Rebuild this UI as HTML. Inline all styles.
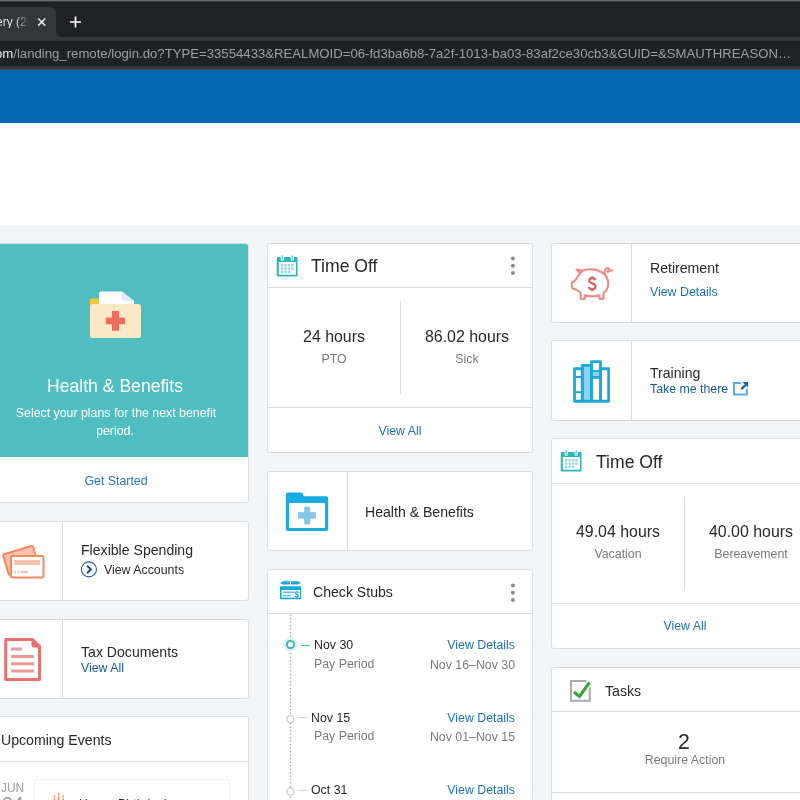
<!DOCTYPE html>
<html><head><meta charset="utf-8">
<style>
*{margin:0;padding:0;box-sizing:border-box}
html,body{width:800px;height:800px;overflow:hidden;background:#f2f5f8;font-family:"Liberation Sans",sans-serif;position:relative}
.a{position:absolute}
.t{position:absolute;white-space:nowrap;line-height:1;will-change:transform}
.card{position:absolute;background:#fff;border:1px solid #dcdcdc;border-radius:3px;overflow:hidden}
.hl{position:absolute;left:0;right:0;height:1px;background:#dcdcdc}
.vl{position:absolute;top:0;bottom:0;width:1px;background:#dcdcdc}
.dk{color:#2e2e2e}
.gr{color:#7a7a7a}
.bl{color:#1f66b3}
</style></head><body>
<!-- browser chrome -->
<div class="a" style="left:0;top:0;width:800px;height:70px;background:#202124"></div>
<div class="a" style="left:0;top:0;width:800px;height:1px;background:#6b6c6e"></div>
<div class="a" style="left:0;top:1px;width:800px;height:1px;background:#3a3b3e"></div>
<div class="a" style="left:-20px;top:7px;width:76px;height:40px;background:#35363a;border-radius:6px 6px 0 0"></div>
<div class="a" style="left:56px;top:31px;width:6px;height:6px;background:#35363a"></div>
<div class="a" style="left:56px;top:25px;width:12px;height:12px;background:#202124;border-radius:0 0 0 6px"></div>
<div class="a" style="left:0;top:37px;width:800px;height:32px;background:#35363a"></div>
<div class="a" style="left:-20px;top:41px;width:840px;height:25px;background:#202124"></div>
<div class="a" style="left:0;top:69px;width:800px;height:1px;background:#4a4a4c"></div>
<div class="t" style="left:-4px;top:15.5px;width:33px;overflow:hidden;font-size:12px;color:transparent;background:linear-gradient(90deg,#e8eaed 0,#e8eaed 20px,#a9abae 25px,rgba(53,54,58,0) 33px);-webkit-background-clip:text;background-clip:text">ery (20</div>
<svg class="a" style="left:36px;top:16px" width="12" height="12" viewBox="0 0 12 12"><path d="M2.2 2.5L9.3 9.6M9.3 2.5L2.2 9.6" stroke="#e8eaed" stroke-width="1.5"/></svg>
<svg class="a" style="left:68px;top:15px" width="14" height="14" viewBox="0 0 14 14"><path d="M7.5 1.5V12.5M2 7H13" stroke="#fff" stroke-width="1.7"/></svg>
<div class="t" style="left:-5.2px;top:46.5px;font-size:13.17px;color:#9aa0a6"><span style="color:#e8eaed">om</span>/landing_remote/login.do?TYPE=33554433&amp;REALMOID=06-fd3ba6b8-7a2f-1013-ba03-83af2ce30cb3&amp;GUID=&amp;SMAUTHREASON…</div>
<!-- blue header -->
<div class="a" style="left:0;top:70px;width:800px;height:53px;background:#0467b1"></div>
<div class="a" style="left:0;top:123px;width:800px;height:102px;background:#fff"></div>

<!-- LEFT COLUMN -->
<div class="card" style="left:-17px;top:243px;width:266px;height:260px">
  <div class="a" style="left:-1px;top:-1px;right:-1px;height:214px;background:#50bec1"></div>
</div>
<div class="card" style="left:-17px;top:521px;width:266px;height:80px"><div class="vl" style="left:78px"></div></div>
<div class="card" style="left:-17px;top:619px;width:266px;height:80px"><div class="vl" style="left:78px"></div></div>
<div class="card" style="left:-17px;top:716px;width:266px;height:120px"><div class="hl" style="top:44px"></div></div>

<!-- MIDDLE COLUMN -->
<div class="card" style="left:267px;top:243px;width:266px;height:210px">
  <div class="hl" style="top:43px"></div>
  <div class="vl" style="left:132px;top:57px;bottom:auto;height:93px"></div>
  <div class="hl" style="top:163px"></div>
</div>
<div class="card" style="left:267px;top:471px;width:266px;height:80px"><div class="vl" style="left:79px"></div></div>
<div class="card" style="left:267px;top:569px;width:266px;height:260px"><div class="hl" style="top:43px"></div></div>

<!-- RIGHT COLUMN -->
<div class="card" style="left:551px;top:243px;width:266px;height:80px"><div class="vl" style="left:79px"></div></div>
<div class="card" style="left:551px;top:340px;width:266px;height:81px"><div class="vl" style="left:79px"></div></div>
<div class="card" style="left:551px;top:438px;width:266px;height:211px">
  <div class="hl" style="top:44px"></div>
  <div class="vl" style="left:132px;top:58px;bottom:auto;height:93px"></div>
  <div class="hl" style="top:164px"></div>
</div>
<div class="card" style="left:551px;top:667px;width:266px;height:200px">
  <div class="hl" style="top:43px"></div>
  <div class="hl" style="top:124px"></div>
</div>

<!-- ICONS -->
<!-- teal folder -->
<svg class="a" style="left:80px;top:280px" width="70" height="70" viewBox="80 280 70 70">
<rect x="90" y="298.4" width="10" height="9" rx="1.5" fill="#f9c23c"/>
<path d="M99 293.4a2 2 0 0 1 2-2H122L134 301V307H99Z" fill="#fff"/>
<path d="M122 291.4L134 301H124.5a2.5 2.5 0 0 1-2.5-2.5Z" fill="#e4e9f6"/>
<rect x="90" y="304" width="51" height="34" rx="2.5" fill="#fbe8c6"/>
<rect x="105.8" y="317.6" width="19.2" height="6.6" fill="#f06b5f"/>
<rect x="112" y="311" width="7" height="19.7" fill="#f06b5f"/>
</svg>
<!-- flex cards -->
<svg class="a" style="left:0px;top:540px" width="50" height="45" viewBox="0 540 50 45">
<rect x="0" y="0" width="31.3" height="21.4" rx="1.5" fill="#f9c4ad" stroke="#f5895e" stroke-width="2" transform="translate(2.8 554.6) rotate(-16.7)"/>
<rect x="11" y="556" width="32.5" height="21.5" rx="1.5" fill="#fff" stroke="#f5895e" stroke-width="2"/>
<rect x="14" y="560" width="26" height="5" fill="#f9c4ad"/>
<rect x="14" y="571.2" width="2" height="1.6" fill="#f9b79c"/>
<rect x="17.3" y="571.2" width="2" height="1.6" fill="#f9b79c"/>
<rect x="20.3" y="571.2" width="7.7" height="1.6" fill="#f9b79c"/>
</svg>
<!-- tax doc -->
<svg class="a" style="left:0px;top:630px" width="50" height="60" viewBox="0 630 50 60">
<path d="M5.7 639.5H32.5L39.5 646.5V679.5H5.7Z" fill="none" stroke="#e8706f" stroke-width="3" stroke-linejoin="round"/>
<path d="M31.5 638L41 647.5H34a2.5 2.5 0 0 1-2.5-2.5Z" fill="#e8706f"/>
<rect x="11" y="647.5" width="11" height="3" fill="#ec9a95"/>
<rect x="11" y="655" width="23" height="3" fill="#ec9a95"/>
<rect x="11" y="662.3" width="23" height="3" fill="#ec9a95"/>
<rect x="11" y="669.5" width="23" height="3" fill="#ec9a95"/>
</svg>
<!-- calendar icons -->
<svg class="a" style="left:270px;top:250px" width="40" height="30" viewBox="270 250 40 30">
<g id="cal">
<rect x="276.75" y="257" width="20.75" height="19.5" rx="1" fill="#2eb5b5"/>
<rect x="278.8" y="262" width="17.2" height="12.7" fill="#fff"/>
<rect x="280.7" y="254.6" width="3.2" height="6" rx="1.2" fill="#fff"/>
<rect x="290.7" y="254.6" width="3.2" height="6" rx="1.2" fill="#fff"/>
<rect x="281.3" y="255" width="2" height="5" rx="1" fill="#8fd3d3"/>
<rect x="291.3" y="255" width="2" height="5" rx="1" fill="#8fd3d3"/>
<g fill="#9ad6d6">
<rect x="281" y="264" width="2.4" height="2.4"/><rect x="284.4" y="264" width="2.4" height="2.4"/><rect x="287.8" y="264" width="2.4" height="2.4"/><rect x="291.2" y="264" width="2.4" height="2.4"/>
<rect x="281" y="267.4" width="2.4" height="2.4"/><rect x="284.4" y="267.4" width="2.4" height="2.4"/><rect x="287.8" y="267.4" width="2.4" height="2.4"/><rect x="291.2" y="267.4" width="2.4" height="2.4"/>
<rect x="281" y="270.8" width="2.4" height="2.4"/><rect x="284.4" y="270.8" width="2.4" height="2.4"/><rect x="287.8" y="270.8" width="2.4" height="2.4"/>
</g></g>
</svg>
<svg class="a" style="left:554px;top:445.4px" width="40" height="30" viewBox="270 250 40 30"><use href="#cal"/></svg>
<!-- menu dots -->
<svg class="a" style="left:505px;top:250px" width="16" height="30" viewBox="505 250 16 30" fill="#8a8a8a">
<circle cx="512.9" cy="258.6" r="2"/><circle cx="512.9" cy="265.75" r="2"/><circle cx="512.9" cy="272.9" r="2"/>
</svg>
<svg class="a" style="left:505px;top:578px" width="16" height="30" viewBox="505 578 16 30" fill="#8a8a8a">
<circle cx="512.9" cy="585.6" r="2"/><circle cx="512.9" cy="592.75" r="2"/><circle cx="512.9" cy="599.9" r="2"/>
</svg>
<!-- blue folder -->
<svg class="a" style="left:280px;top:485px" width="60" height="50" viewBox="280 485 60 50">
<path d="M285.85 494.5a2 2 0 0 1 2-2H301a2 2 0 0 1 1.8 1.2L303.5 496.25H326.2a2 2 0 0 1 2 2V528.9a2 2 0 0 1-2 2H287.85a2 2 0 0 1-2-2Z" fill="#1aabe0"/>
<rect x="289" y="503" width="36" height="25" rx="1" fill="#fff"/>
<rect x="298" y="512.2" width="18" height="6.4" fill="#85c5e6"/>
<rect x="304.2" y="506.75" width="6" height="17.65" fill="#85c5e6"/>
</svg>
<!-- check stubs icon -->
<svg class="a" style="left:270px;top:575px" width="40" height="35" viewBox="270 575 40 35">
<path d="M280 583L283 581.3H290V584.6H283Z" fill="#1aa8dc"/>
<path d="M291 581.3H298L301 583L298 584.6H291Z" fill="#1aa8dc"/>
<rect x="284" y="580.6" width="4.5" height="1.2" fill="#6cc6e8"/>
<rect x="280" y="586.25" width="21.25" height="13" rx="1" fill="#1aa8dc"/>
<rect x="281.5" y="590" width="18.5" height="7.6" fill="#fff"/>
<rect x="283" y="591.5" width="11.5" height="1.5" fill="#5cc0e6"/>
<rect x="283" y="595" width="8" height="1.3" fill="#5cc0e6"/>
<path d="M298.2 592.9C298 592.2 297.5 591.9 296.8 591.9C295.9 591.9 295.3 592.4 295.3 593.1C295.3 594.6 298.3 594.1 298.3 595.7C298.3 596.5 297.7 597 296.8 597C296 597 295.4 596.6 295.2 595.9M296.8 590.8V591.9M296.8 597V598" fill="none" stroke="#1aa8dc" stroke-width="1.2"/>
</svg>
<!-- timeline -->
<svg class="a" style="left:270px;top:614px" width="60" height="186" viewBox="270 614 60 186">
<line x1="290.5" y1="614.5" x2="290.5" y2="800" stroke="#9c9c9c" stroke-width="1.3" stroke-dasharray="1.2 2.3"/>
<circle cx="290.5" cy="644.5" r="7.2" fill="#dcf2f2"/>
<circle cx="290.5" cy="644.5" r="3.6" fill="#fff" stroke="#2fb5b5" stroke-width="1.8"/>
<line x1="301.2" y1="645.5" x2="310" y2="645.5" stroke="#4fc0c0" stroke-width="1.1"/>
<circle cx="290.5" cy="719" r="3.6" fill="#fff" stroke="#cbcbcb" stroke-width="1.3"/>
<line x1="298.7" y1="717.5" x2="307.3" y2="717.5" stroke="#cfcfcf" stroke-width="1.1"/>
<circle cx="290.5" cy="791.5" r="3.6" fill="#fff" stroke="#cbcbcb" stroke-width="1.3"/>
<line x1="298.7" y1="790.5" x2="307.3" y2="790.5" stroke="#cfcfcf" stroke-width="1.1"/>
</svg>
<!-- piggy -->
<svg class="a" style="left:565px;top:260px" width="50" height="45" viewBox="0 0 50 45">
<path d="M18.2 10.5C22.5 8.8 31 8.5 36.5 12C41.5 15.3 43.5 19.5 43.2 24.2C43 28 41.3 30.8 38.6 32.6L38.4 38.9H34.6L34.3 35.3C30 36.6 24.5 36.6 20.2 35.2L19.9 38.9H15.8L15.5 32.6C13.8 31.3 12.6 30.3 11.3 29.6L7.2 28.3L6.6 22.8L9.4 21.3C11.3 19.3 12.8 16.5 15.2 13.2L11.6 9.6L18.2 10.5L15.2 13.2" fill="none" stroke="#ec8f8c" stroke-width="2.2" stroke-linejoin="round"/>
<path d="M40.2 14.8C38.8 11.5 39.8 8 42.6 7.9C44.8 7.8 45.3 10.9 43.4 11.8C42.2 12.3 41.8 10.8 43.2 10.6C44.6 10.4 45.6 11.6 47.2 10.2" fill="none" stroke="#ec8f8c" stroke-width="2" stroke-linecap="round" stroke-linejoin="round"/>
<path d="M30.2 20.3C29.8 18.9 28.8 18.2 27.2 18.2C25.3 18.2 24.2 19.2 24.2 20.6C24.2 24 30.5 22.8 30.5 26.6C30.5 28.2 29.2 29.3 27.2 29.3C25.4 29.3 24.2 28.5 23.8 27M27.2 16.3V18.2M27.2 29.3V31.2" fill="none" stroke="#e45c5c" stroke-width="2.2"/>
</svg>
<!-- books -->
<svg class="a" style="left:565px;top:355px" width="50" height="50" viewBox="565 355 50 50">
<rect x="583" y="366" width="8" height="35" fill="#8dd3ef"/>
<rect x="592" y="371.5" width="8" height="4.8" fill="#8dd3ef"/>
<g fill="none" stroke="#1ba8dc" stroke-width="2.8" stroke-linejoin="round">
<rect x="574.5" y="368.75" width="7.8" height="32.5"/>
<rect x="582.3" y="365.3" width="9.1" height="35.95"/>
<rect x="591.4" y="361.6" width="9.1" height="39.65"/>
<rect x="600.5" y="368.75" width="8.1" height="32.5"/>
</g>
<g fill="#1ba8dc">
<rect x="574" y="376" width="8" height="2.1"/><rect x="574" y="391.2" width="8" height="1.9"/>
<rect x="591" y="370" width="10" height="1.9"/><rect x="591" y="376" width="10" height="2.75"/>
</g>
</svg>
<!-- external link -->
<svg class="a" style="left:725px;top:375px" width="30" height="25" viewBox="725 375 30 25">
<path d="M740.75 382.9H733.9V394.6H746.9V389" fill="none" stroke="#5fa8e0" stroke-width="2"/>
<path d="M741.3 389.3L745.5 385" stroke="#0a64b4" stroke-width="2.3"/>
<path d="M742.5 382H748V387.5Z" fill="#0a64b4"/>
</svg>
<!-- chevron circle -->
<svg class="a" style="left:78px;top:558px" width="24" height="24" viewBox="78 558 24 24">
<circle cx="88.95" cy="569.4" r="7.5" fill="none" stroke="#2c60a0" stroke-width="1.1"/>
<path d="M87 565.8L90.9 569.4L87 573" fill="none" stroke="#0b4a8f" stroke-width="1.9"/>
</svg>
<!-- checkbox -->
<svg class="a" style="left:565px;top:675px" width="30" height="30" viewBox="565 675 30 30">
<path d="M586.5 681H571V700.75H589.75V687.5" fill="none" stroke="#ababae" stroke-width="2"/>
<path d="M574 692L579.5 696.5L589.5 682.5" fill="none" stroke="#3aa53a" stroke-width="3.2"/>
</svg>
<!-- event card -->
<div class="a" style="left:34px;top:779px;width:196px;height:60px;border:1px solid #f1f0eb;border-radius:3px;background:#fff"></div>
<svg class="a" style="left:50px;top:790px" width="20" height="10" viewBox="50 790 20 10" fill="#f28a5b">
<rect x="53.7" y="795.3" width="1.5" height="2"/><rect x="58" y="793.2" width="1.5" height="2"/><rect x="62.4" y="795.3" width="1.5" height="2"/>
<rect x="53.7" y="798.3" width="1.5" height="2"/><rect x="58" y="796.3" width="1.5" height="4"/><rect x="62.4" y="798.3" width="1.5" height="2"/>
</svg>

<div class="t" style="left:-384.60px;width:1000px;text-align:center;top:377.70px;font-size:17.6px;color:#fff;">Health &amp; Benefits</div>
<div class="t" style="left:-384.50px;width:1000px;text-align:center;top:407.35px;font-size:12.35px;color:#fff;">Select your plans for the next benefit</div>
<div class="t" style="left:-384.60px;width:1000px;text-align:center;top:424.75px;font-size:12.35px;color:#fff;">period.</div>
<div class="t" style="left:-384.50px;width:1000px;text-align:center;top:474.85px;font-size:12.35px;color:#2676c2;">Get Started</div>
<div class="t" style="left:80.80px;top:543.26px;font-size:14.1px;color:#282828;">Flexible Spending</div>
<div class="t" style="left:103.70px;top:563.75px;font-size:12.35px;color:#282828;">View Accounts</div>
<div class="t" style="left:80.80px;top:645.06px;font-size:14.1px;color:#282828;">Tax Documents</div>
<div class="t" style="left:80.80px;top:662.25px;font-size:12.35px;color:#1a589a;">View All</div>
<div class="t" style="left:1.10px;top:732.86px;font-size:14.1px;color:#282828;">Upcoming Events</div>
<div class="t" style="left:0.50px;top:782.63px;font-size:11.9px;color:#9a9a9a;">JUN</div>
<div class="t" style="left:1.80px;top:794.89px;font-size:19.5px;color:#9a9a9a;">24</div>
<div class="t" style="left:79.00px;top:798.05px;font-size:12.35px;color:#282828;">Happy Birthday!</div>
<div class="t" style="left:311.30px;top:257.80px;font-size:17.6px;color:#282828;">Time Off</div>
<div class="t" style="left:-166.50px;width:1000px;text-align:center;top:328.99px;font-size:15.9px;color:#282828;">24 hours</div>
<div class="t" style="left:-33.50px;width:1000px;text-align:center;top:328.99px;font-size:15.9px;color:#282828;">86.02 hours</div>
<div class="t" style="left:-166.50px;width:1000px;text-align:center;top:353.25px;font-size:12.35px;color:#7a7a7a;">PTO</div>
<div class="t" style="left:-33.50px;width:1000px;text-align:center;top:353.25px;font-size:12.35px;color:#7a7a7a;">Sick</div>
<div class="t" style="left:-100.00px;width:1000px;text-align:center;top:424.75px;font-size:12.35px;color:#1f6fba;">View All</div>
<div class="t" style="left:365.20px;top:504.76px;font-size:14.1px;color:#282828;">Health &amp; Benefits</div>
<div class="t" style="left:312.70px;top:585.26px;font-size:14.1px;color:#282828;">Check Stubs</div>
<div class="t" style="left:313.90px;top:639.00px;font-size:12.35px;color:#282828;">Nov 30</div>
<div class="t" style="left:314.00px;top:657.75px;font-size:12.35px;color:#7a7a7a;">Pay Period</div>
<div class="t" style="left:-485.50px;width:1000px;text-align:right;top:639.45px;font-size:12.35px;color:#1f6fba;">View Details</div>
<div class="t" style="left:-485.50px;width:1000px;text-align:right;top:658.75px;font-size:12.35px;color:#7a7a7a;">Nov 16–Nov 30</div>
<div class="t" style="left:311.00px;top:711.55px;font-size:12.35px;color:#282828;">Nov 15</div>
<div class="t" style="left:314.00px;top:730.45px;font-size:12.35px;color:#7a7a7a;">Pay Period</div>
<div class="t" style="left:-485.50px;width:1000px;text-align:right;top:711.75px;font-size:12.35px;color:#1f6fba;">View Details</div>
<div class="t" style="left:-485.50px;width:1000px;text-align:right;top:730.75px;font-size:12.35px;color:#7a7a7a;">Nov 01–Nov 15</div>
<div class="t" style="left:311.00px;top:784.00px;font-size:12.35px;color:#282828;">Oct 31</div>
<div class="t" style="left:-485.50px;width:1000px;text-align:right;top:784.25px;font-size:12.35px;color:#1f6fba;">View Details</div>
<div class="t" style="left:650.00px;top:261.36px;font-size:14.1px;color:#282828;">Retirement</div>
<div class="t" style="left:650.00px;top:286.05px;font-size:12.35px;color:#1f6fba;">View Details</div>
<div class="t" style="left:650.00px;top:365.86px;font-size:14.1px;color:#282828;">Training</div>
<div class="t" style="left:650.00px;top:382.95px;font-size:12.35px;color:#1a589a;">Take me there</div>
<div class="t" style="left:596.10px;top:454.10px;font-size:17.6px;color:#282828;">Time Off</div>
<div class="t" style="left:118.00px;width:1000px;text-align:center;top:524.44px;font-size:15.9px;color:#282828;">49.04 hours</div>
<div class="t" style="left:250.50px;width:1000px;text-align:center;top:524.44px;font-size:15.9px;color:#282828;">40.00 hours</div>
<div class="t" style="left:118.00px;width:1000px;text-align:center;top:548.05px;font-size:12.35px;color:#7a7a7a;">Vacation</div>
<div class="t" style="left:251.00px;width:1000px;text-align:center;top:548.05px;font-size:12.35px;color:#7a7a7a;">Bereavement</div>
<div class="t" style="left:184.50px;width:1000px;text-align:center;top:620.15px;font-size:12.35px;color:#1f6fba;">View All</div>
<div class="t" style="left:604.50px;top:683.66px;font-size:14.1px;color:#282828;">Tasks</div>
<div class="t" style="left:184.20px;width:1000px;text-align:center;top:732.17px;font-size:21.3px;color:#282828;">2</div>
<div class="t" style="left:184.50px;width:1000px;text-align:center;top:754.15px;font-size:12.35px;color:#7a7a7a;">Require Action</div>

</body></html>
